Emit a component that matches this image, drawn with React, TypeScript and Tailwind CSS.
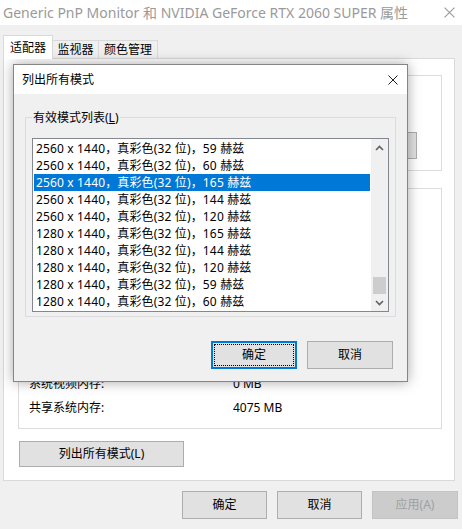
import React from "react";

const modes: [string, string][] = [
    ["2560", "59"],
    ["2560", "60"],
    ["2560", "165"],
    ["2560", "144"],
    ["2560", "120"],
    ["1280", "165"],
    ["1280", "144"],
    ["1280", "120"],
    ["1280", "59"],
    ["1280", "60"],
];

function CloseIcon({color, size}: { color: string; size: number }) {
    return (
        <svg width={size} height={size} viewBox="0 0 10 10">
            <path d="M0.5 0.5 L9.5 9.5 M9.5 0.5 L0.5 9.5" stroke={color} strokeWidth="1"/>
        </svg>
    );
}

function Chevron({down}: { down?: boolean }) {
    return (
        <svg width="9" height="6" viewBox="0 0 9 6">
            <polyline
                points={down ? "1,1 4.5,4.5 8,1" : "1,5 4.5,1.5 8,5"}
                fill="none"
                stroke="#606060"
                strokeWidth="1.6"
            />
        </svg>
    );
}

const btn = "h-[28px] w-[85px] bg-[#e1e1e1] border border-[#adadad] flex items-center justify-center";

export default function App() {
    return (
        <div className="relative w-[462px] h-[529px] overflow-hidden bg-[#f0f0f0] text-[12px] text-black font-['Noto_Sans','Noto_Sans_CJK_SC',sans-serif]">
            {/* window title */}
            <div className="h-[25px] bg-white flex items-center justify-between pl-[3px] pr-[7px]">
                <span className="text-[14px] text-[#9a9a9a] leading-none">
                    Generic PnP Monitor 和 NVIDIA GeForce RTX 2060 SUPER 属性
                </span>
                <CloseIcon color="#9a9a9a" size={11}/>
            </div>

            {/* tabs */}
            <div className="flex items-end h-[33px] pl-[3px]">
                <div className="relative z-10 -mb-px h-[24px] w-[50px] bg-white border border-b-0 border-[#d9d9d9] flex items-center justify-center">
                    适配器
                </div>
                <div className="h-[18px] w-[46px] border border-l-0 border-b-0 border-[#d9d9d9] flex items-center justify-center">
                    监视器
                </div>
                <div className="h-[18px] w-[59px] border border-l-0 border-b-0 border-[#d9d9d9] flex items-center justify-center">
                    颜色管理
                </div>
            </div>

            {/* tab panel */}
            <div className="ml-[3px] w-[452px] h-[423px] bg-white border border-[#d9d9d9] pl-[14px] pt-[16px]">
                <div className="w-[424px] h-[96px] border border-[#dcdcdc] flex justify-end items-end pr-[24px] pb-[11px]">
                    <div className="h-[27px] w-[86px] bg-[#e1e1e1] border border-[#adadad]"/>
                </div>
                <div className="mt-[17px] w-[424px] h-[241px] border border-[#dcdcdc] flex flex-col justify-end pb-[8px] pl-[10px]">
                    <div className="flex h-[24px] items-center">
                        <span className="w-[204px]">系统视频内存:</span>
                        <span>0 MB</span>
                    </div>
                    <div className="flex h-[24px] items-center">
                        <span className="w-[204px]">共享系统内存:</span>
                        <span>4075 MB</span>
                    </div>
                </div>
                <div className="mt-[12px] ml-px h-[26px] w-[165px] bg-[#e1e1e1] border border-[#adadad] flex items-center justify-center">
                    列出所有模式(L)
                </div>
            </div>

            {/* bottom buttons */}
            <div className="mt-[10px] flex justify-end gap-[10px] pr-[4px]">
                <div className={btn}>确定</div>
                <div className={btn}>取消</div>
                <div className="h-[28px] w-[86px] bg-[#cccccc] border border-[#c4c4c4] text-[#a0a0a0] flex items-center justify-center">
                    应用(A)
                </div>
            </div>

            {/* modal dialog */}
            <div className="absolute left-[13px] top-[64px] w-[395px] h-[318px] bg-[#f0f0f0] border border-[#858585] shadow-[0_0_12px_rgba(0,0,0,0.35)]">
                <div className="h-[29px] bg-white flex items-center justify-between pl-[8px] pr-[9px]">
                    <span>列出所有模式</span>
                    <CloseIcon color="#222" size={10}/>
                </div>

                <div className="relative mt-[23px] mx-[11px] h-[200px] border border-[#dcdcdc]">
                    <span className="absolute left-[6px] -top-[9px] px-[1px] bg-[#f0f0f0] leading-[17px]">
                        有效模式列表(<span className="underline">L</span>)
                    </span>
                    <div className="mt-[20px] ml-[6px] w-[357px] h-[174px] bg-white border border-[#828790] flex">
                        <div className="flex-1 pt-[1px] px-[1px]">
                            {modes.map(([w, hz], i) => (
                                <div
                                    key={i}
                                    className={
                                        i === 2
                                            ? "h-[17px] leading-[17px] pl-[2px] bg-[#0078d7] text-white whitespace-nowrap tracking-[0.15px]"
                                            : "h-[17px] leading-[17px] pl-[2px] whitespace-nowrap tracking-[0.15px]"
                                    }
                                >
                                    {w} x 1440，真彩色(32 位)，{hz} 赫兹
                                </div>
                            ))}
                        </div>
                        <div className="w-[17px] bg-[#f0f0f0] flex flex-col">
                            <div className="h-[17px] flex items-center justify-center">
                                <Chevron/>
                            </div>
                            <div className="flex-1 flex flex-col justify-end px-[2px]">
                                <div className="h-[17px] bg-[#cdcdcd]"/>
                            </div>
                            <div className="h-[17px] flex items-center justify-center">
                                <Chevron down/>
                            </div>
                        </div>
                    </div>
                </div>

                <div className="mt-[24px] flex justify-end gap-[10px] pr-[14px]">
                    <div className="h-[28px] w-[86px] bg-[#e1e1e1] border-2 border-[#0078d7] outline-1 outline-dotted outline-black outline-offset-[-4px] flex items-center justify-center">
                        确定
                    </div>
                    <div className="h-[28px] w-[86px] bg-[#e1e1e1] border border-[#adadad] flex items-center justify-center">
                        取消
                    </div>
                </div>
            </div>
        </div>
    );
}
